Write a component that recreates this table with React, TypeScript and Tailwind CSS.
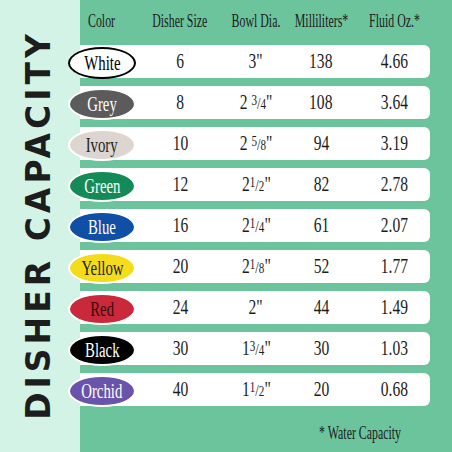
import React from 'react';

type Row = {
  color: string;
  pill: string;
  size: string;
  bowl: React.ReactNode;
  ml: string;
  oz: string;
};

const frac = (whole: string, num: string, den: string) => (
  <span>
    {whole}
    <span className="text-[15px] align-[4px]">{num}</span>
    <span className="text-[17px]">/</span>
    <span className="text-[15px]">{den}</span>"
  </span>
);

const rows: Row[] = [
  { color: 'White', pill: 'bg-white text-black border-black', size: '6', bowl: '3"', ml: '138', oz: '4.66' },
  { color: 'Grey', pill: 'bg-[#5b5b5b] text-white border-white', size: '8', bowl: frac('2 ', '3', '4'), ml: '108', oz: '3.64' },
  { color: 'Ivory', pill: 'bg-[#ddd5cf] text-[#222] border-white', size: '10', bowl: frac('2 ', '5', '8'), ml: '94', oz: '3.19' },
  { color: 'Green', pill: 'bg-[#148b57] text-white border-white', size: '12', bowl: frac('2', '1', '2'), ml: '82', oz: '2.78' },
  { color: 'Blue', pill: 'bg-[#0f4fa6] text-white border-white', size: '16', bowl: frac('2', '1', '4'), ml: '61', oz: '2.07' },
  { color: 'Yellow', pill: 'bg-[#f4dc1b] text-[#222] border-white', size: '20', bowl: frac('2', '1', '8'), ml: '52', oz: '1.77' },
  { color: 'Red', pill: 'bg-[#c9293a] text-[#3a0a0e] border-white', size: '24', bowl: '2"', ml: '44', oz: '1.49' },
  { color: 'Black', pill: 'bg-black text-white border-white', size: '30', bowl: frac('1', '3', '4'), ml: '30', oz: '1.03' },
  { color: 'Orchid', pill: 'bg-[#6a53aa] text-white border-white', size: '40', bowl: frac('1', '1', '2'), ml: '20', oz: '0.68' },
];

const grid = 'grid grid-cols-[44px_112px_40px_90px_56px] items-center';
const cell = 'flex justify-center whitespace-nowrap';
const squeeze = 'inline-block scale-x-[0.74]';
const narrow = 'inline-block scale-x-[0.66]';

export default function App() {
  return (
    <div className="flex w-[452px] h-[452px] overflow-hidden font-['Liberation_Serif',serif] text-[#1c1c1c]">
      <div className="w-[80px] shrink-0 bg-[#d4f3e7] flex items-center justify-center pr-[3px] pb-[2px]">
        <div className="[writing-mode:vertical-rl] rotate-180 font-['DejaVu_Sans',sans-serif] font-bold text-[33px] tracking-[4px] text-[#1d1d1d] leading-none whitespace-nowrap">
          DISHER CAPACITY
        </div>
      </div>
      <div className="flex-1 bg-[#6cc49c] flex flex-col pr-[22px]">
        <div className={`${grid} h-[45px] pb-[2px] text-[18px]`}>
          <div className={cell}><span className={narrow}>Color</span></div>
          <div className={cell}><span className={narrow}>Disher Size</span></div>
          <div className={cell}><span className={narrow}>Bowl Dia.</span></div>
          <div className={cell}><span className={narrow}>Milliliters*</span></div>
          <div className={cell}><span className={narrow}>Fluid Oz.*</span></div>
        </div>
        <div className="flex flex-col gap-[8px]">
          {rows.map((r) => (
            <div key={r.color} className={`${grid} h-[33px] bg-white rounded-r-[6px] text-[21px]`}>
              <div className={cell}>
                <div
                  className={`w-[68px] h-[32px] shrink-0 rounded-[50%] border-2 ${r.pill} flex items-center justify-center text-[20px] mt-[2px]`}
                >
                  <span className={squeeze}>{r.color}</span>
                </div>
              </div>
              <div className={cell}><span className={squeeze}>{r.size}</span></div>
              <div className={cell}><span className={squeeze}>{r.bowl}</span></div>
              <div className={cell}><span className={squeeze}>{r.ml}</span></div>
              <div className={cell}><span className={squeeze}>{r.oz}</span></div>
            </div>
          ))}
        </div>
        <div className="flex justify-end pr-[8px] pt-[14px] text-[18px]">
          <span className={narrow}>* Water Capacity</span>
        </div>
      </div>
    </div>
  );
}
